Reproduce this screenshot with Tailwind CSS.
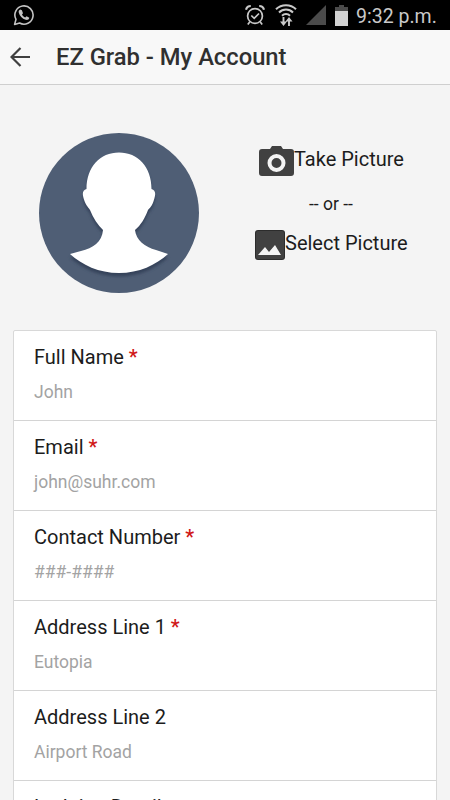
<!DOCTYPE html>
<html lang="en">
<head>
  <meta charset="UTF-8">
  <meta name="viewport" content="width=device-width, initial-scale=1.0">
  <title>EZ Grab - My Account</title>
  <script src="https://cdn.jsdelivr.net/npm/@tailwindcss/browser@4"></script>
</head>
<body class="font-[Roboto,sans-serif] bg-[#f4f4f4] text-[#1c1c1c] h-screen overflow-hidden">

  <!-- Status bar -->
  <div class="h-[30px] bg-black flex items-center pl-[13px] pr-[14px]">
    <svg class="w-[22px] h-[22px]" viewBox="0 0 22 22" fill="none" stroke="#c4c4c4" stroke-width="1.6">
      <path d="M1.6 20.4 3 15.4A9.1 9.1 0 1 1 6.6 19Z" stroke-linejoin="round"/>
      <path d="M7.4 5.6c-1.400.3-2 1.700-1.600 3.200.8 3.100 3.400 5.900 6.900 7 1.800.5 3.300-.3 3.600-2.100l-2.700-1.400-1.400 1.300c-1.500-.7-2.500-1.700-3.200-3.100l1-1.300-1.100-3Z" fill="#c4c4c4" stroke="none"/>
    </svg>
    <svg class="w-[20px] h-[22px] ml-auto" viewBox="0 0 20 22" fill="none" stroke="#c9c9c9" stroke-width="1.7">
      <circle cx="10" cy="12" r="7.400"/>
      <path d="M6.300 11.500 9.200 14.300 14 9.500M4.700 18 2.800 20.500M15.300 18l1.900 2.500"/>
      <path d="M1 5.800C1.500 3.500 3.300 2 5.800 2M19 5.800C18.500 3.500 16.700 2 14.200 2" stroke-width="2.200"/>
    </svg>
    <svg class="w-[22px] h-[24px] ml-[10px]" viewBox="0 0 22 24" fill="none" stroke="#c9c9c9" stroke-width="2">
      <path d="M1 6.200C6.500.8 15.500.8 21 6.200M4 9.500c4-4 10-4 14 0M7 12.700c2.300-2.300 5.700-2.300 8 0"/>
      <path d="M8.500 14v6M14 17v6" stroke-width="1.900"/>
      <path d="M5 18.500h7L8.500 23ZM10.500 18.500l3.500-4.500 3.500 4.500Z" fill="#c9c9c9" stroke="none"/>
    </svg>
    <svg class="w-[20px] h-[20px] ml-[9px]" viewBox="0 0 20 20"><path d="M0 20 20 0v20Z" fill="#4b4b4b"/></svg>
    <svg class="w-[13px] h-[21px] ml-[9px]" viewBox="0 0 13 21"><path d="M4 0h5v2h4v4H0V2h4Z" fill="#4b4b4b"/><path d="M0 6h13v15H0Z" fill="#d2d2d2"/></svg>
    <span class="ml-[8px] text-[19.5px] leading-[30px] text-[#c9c9c9] whitespace-nowrap w-[80px] pt-[3px]">9:32 p.m.</span>
  </div>

  <!-- App bar -->
  <header class="h-[55px] bg-[#f8f8f8] border-b border-[#cfcfcf] flex items-center pl-[10px]">
    <svg class="w-[20px] h-[20px]" viewBox="0 0 20 20" fill="none" stroke="#404040" stroke-width="2.200"><path d="M20 10H2M10.500 1 1.500 10l9 9"/></svg>
    <h1 class="ml-[26px] pt-[2px] text-[23.75px] font-medium text-[#303030] whitespace-nowrap">EZ Grab - My Account</h1>
  </header>

  <!-- Profile picture -->
  <section class="h-[245px] flex">
    <svg class="w-[160px] h-[160px] ml-[39px] mt-[47.5px] shrink-0" viewBox="0 0 160 160">
      <defs>
        <filter id="soft"><feGaussianBlur stdDeviation="1.5"/></filter>
        <path id="person" d="M80 19.500C61 19.500 47.500 34 47.500 56C44 57 43 60 44.500 65C46 71 49 74 51 77C54 85 59 92 64 97C63 109 54 115 42 118C38 119 35 120 31 121C43 132 60 140 80 140C100 140 117 132 129 121C125 120 121 118 117 117C106 114 97 107 96 97C102 92 106 85 109 77C112 74 114 71 115.500 65C117 60 116 57 112.500 56C112.500 34 99 19.500 80 19.500Z"/>
      </defs>
      <circle cx="80" cy="80" r="80" fill="#4f5e75"/>
      <use href="#person" y="3.500" fill="#36435a" filter="url(#soft)"/>
      <use href="#person" fill="#fff"/>
    </svg>
    <div class="ml-[56px] mt-[59px] text-[20px] leading-[30px] whitespace-nowrap">
      <div class="flex h-[34px] ml-[4px]">
        <svg class="w-[35px] h-[31px] mt-[2px]" viewBox="0 0 35 31">
          <path d="M3 3h8l2-3h9l2 3h8q3 0 3 3v21q0 3-3 3H3q-3 0-3-3V6q0-3 3-3Z" fill="#414141"/>
          <circle cx="17.500" cy="17" r="7" fill="none" stroke="#f4f4f4" stroke-width="4"/>
        </svg>
        <span>Take Picture</span>
      </div>
      <div class="h-[50px] pl-[54px] pt-[11px] text-[17.5px]">-- or --</div>
      <div class="flex">
        <svg class="w-[30px] h-[30px] mt-[2px]" viewBox="0 0 30 30">
          <rect width="30" height="30" rx="3" fill="#2c2c2c"/>
          <rect x="1" y="1" width="28" height="28" rx="2" fill="#414141"/>
          <path d="m3 25 7-8 4 5 6-7 6 10Z" fill="#f4f4f4"/>
        </svg>
        <span>Select Picture</span>
      </div>
    </div>
  </section>

  <!-- Account form -->
  <form class="mx-[13px] bg-white border border-[#d8d8d8] rounded-[2px]">
    <label class="block h-[90px] px-[20px] pt-[10px] border-b border-[#d4d4d4]">
      <span class="block text-[20px] leading-[32px]">Full Name <b class="font-medium text-[#d01818]">*</b></span>
      <span class="block mt-[4px] text-[17.5px] leading-[30px] text-[#a3a3a3]">John</span>
    </label>
    <label class="block h-[90px] px-[20px] pt-[10px] border-b border-[#d4d4d4]">
      <span class="block text-[20px] leading-[32px]">Email <b class="font-medium text-[#d01818]">*</b></span>
      <span class="block mt-[4px] text-[17.5px] leading-[30px] text-[#a3a3a3]">john@suhr.com</span>
    </label>
    <label class="block h-[90px] px-[20px] pt-[10px] border-b border-[#d4d4d4]">
      <span class="block text-[20px] leading-[32px]">Contact Number <b class="font-medium text-[#d01818]">*</b></span>
      <span class="block mt-[4px] text-[17.5px] leading-[30px] text-[#a3a3a3]">###-####</span>
    </label>
    <label class="block h-[90px] px-[20px] pt-[10px] border-b border-[#d4d4d4]">
      <span class="block text-[20px] leading-[32px]">Address Line 1 <b class="font-medium text-[#d01818]">*</b></span>
      <span class="block mt-[4px] text-[17.5px] leading-[30px] text-[#a3a3a3]">Eutopia</span>
    </label>
    <label class="block h-[90px] px-[20px] pt-[10px] border-b border-[#d4d4d4]">
      <span class="block text-[20px] leading-[32px]">Address Line 2</span>
      <span class="block mt-[4px] text-[17.5px] leading-[30px] text-[#a3a3a3]">Airport Road</span>
    </label>
    <label class="block h-[90px] px-[20px] pt-[10px]">
      <span class="block text-[20px] leading-[32px]">Lodging Details</span>
    </label>
  </form>
</body>
</html>
